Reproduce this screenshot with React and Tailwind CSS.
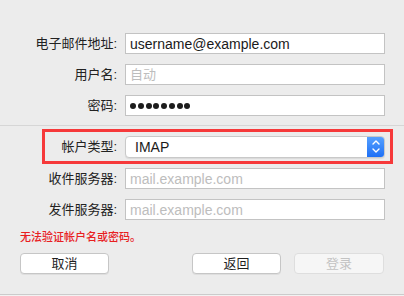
import React from "react";

const cjk = { fontFamily: '"Liberation Sans", "Noto Sans CJK SC", sans-serif' };

function Label({ children, w = "w-[117px]" }) {
  return (
    <div className={`${w} shrink-0 text-right text-[13px] leading-none text-[#222222]`} style={cjk}>
      {children}
    </div>
  );
}

function Field({ value, placeholder }) {
  return (
    <div className="ml-[8px] flex h-[21px] w-[260px] items-center border border-[#c3c3c3] bg-white px-[4px] text-[14px] leading-none">
      {value ? (
        <span className="text-[#1a1a1a]">{value}</span>
      ) : (
        <span className="text-[#bdbdbd]">{placeholder}</span>
      )}
    </div>
  );
}

function Button({ children, disabled, className = "" }) {
  return (
    <button
      className={`flex h-[21px] items-center justify-center rounded-[4px] border text-[13px] leading-none ${
        disabled
          ? "border-[#dedede] bg-[#f6f6f6] text-[#c3c3c3]"
          : "border-[#c6c6c6] bg-white text-[#1f1f1f] shadow-[0_1px_0_rgba(0,0,0,0.06)]"
      } ${className}`}
      style={cjk}
    >
      {children}
    </button>
  );
}

export default function App() {
  return (
    <div className="flex h-[296px] w-[404px] flex-col bg-[#ececec]" style={cjk}>
      <div className="flex flex-col gap-[10px] pt-[33px]">
        <div className="flex items-center">
          <Label>电子邮件地址:</Label>
          <Field value="username@example.com" />
        </div>
        <div className="flex items-center">
          <Label>用户名:</Label>
          <div className="ml-[8px] flex h-[21px] w-[260px] items-center border border-[#c3c3c3] bg-white px-[4px] text-[13px] leading-none text-[#bdbdbd]">
            自动
          </div>
        </div>
        <div className="flex items-center">
          <Label>密码:</Label>
          <div className="ml-[8px] flex h-[21px] w-[260px] items-center gap-[1.75px] border border-[#c3c3c3] bg-white px-[4px]">
            {Array.from({ length: 8 }).map((_, i) => (
              <span key={i} className="h-[6px] w-[6px] rounded-full bg-[#1c1c1c]" />
            ))}
          </div>
        </div>
      </div>

      <div className="mt-[9px] h-px w-full bg-[#d6d6d6]" />

      <div className="ml-[42px] mt-[3px] flex h-[35px] w-[351px] items-center border-[3px] border-[#f6393a]">
        <Label w="w-[72px]">帐户类型:</Label>
        <div className="ml-[8px] flex h-[22px] w-[260px] items-stretch overflow-hidden rounded-[4px] border border-[#c9c9c9] bg-white shadow-[0_1px_1px_rgba(0,0,0,0.08)]">
          <div className="flex flex-1 items-center pl-[9px] text-[14px] leading-none text-[#1a1a1a]">IMAP</div>
          <div className="flex w-[17px] flex-col items-center justify-center gap-[3px] bg-gradient-to-b from-[#55a0ff] to-[#1d6ff5]">
            <svg width="8" height="5" viewBox="0 0 8 5">
              <path d="M1 4 L4 1 L7 4" fill="none" stroke="white" strokeWidth="1.4" strokeLinecap="round" strokeLinejoin="round" />
            </svg>
            <svg width="8" height="5" viewBox="0 0 8 5">
              <path d="M1 1 L4 4 L7 1" fill="none" stroke="white" strokeWidth="1.4" strokeLinecap="round" strokeLinejoin="round" />
            </svg>
          </div>
        </div>
      </div>

      <div className="mt-[4px] flex flex-col gap-[10px]">
        <div className="flex items-center">
          <Label>收件服务器:</Label>
          <Field placeholder="mail.example.com" />
        </div>
        <div className="flex items-center">
          <Label>发件服务器:</Label>
          <Field placeholder="mail.example.com" />
        </div>
      </div>

      <div className="ml-[20px] mt-[12px] text-[11px] font-medium leading-none text-[#e8201f]">无法验证帐户名或密码。</div>

      <div className="mt-[10px] flex items-center px-[20px]">
        <Button className="w-[89px]">取消</Button>
        <div className="flex-1" />
        <Button className="w-[89px]">返回</Button>
        <Button disabled className="ml-[13px] w-[90px]">登录</Button>
      </div>

      <div className="mt-auto h-px w-full bg-[#cbcbcb]" />
      <div className="h-px w-full bg-[#f2f2f2]" />
    </div>
  );
}
